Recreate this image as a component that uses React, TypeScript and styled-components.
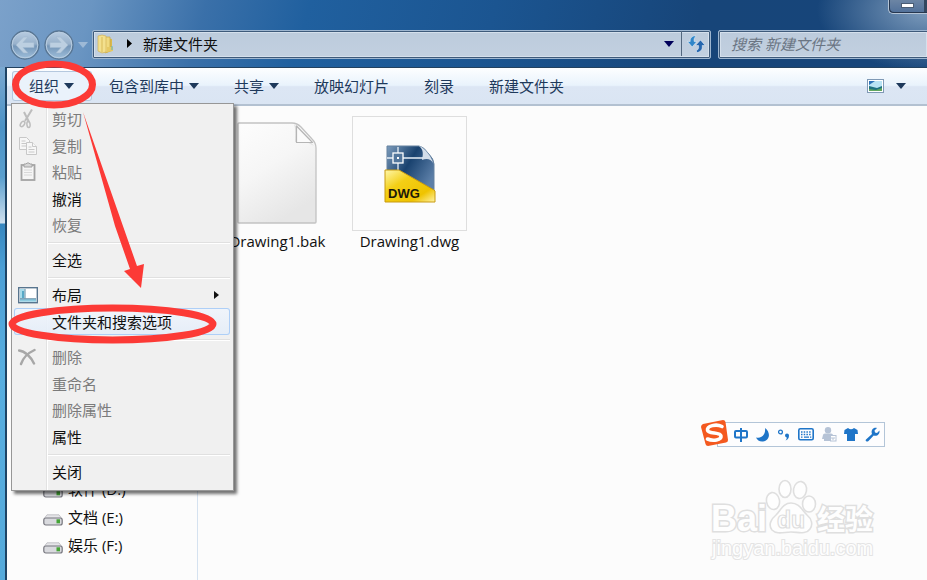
import React from "react";
import styled, { createGlobalStyle, css } from "styled-components";

const GlobalStyle = createGlobalStyle`
  * { box-sizing: border-box; }
  body {
    margin: 0;
    font-family: "Open Sans", "Noto Sans CJK SC", sans-serif;
    font-size: 15px;
    line-height: 20px;
    color: #101010;
  }
  button, input { font: inherit; color: inherit; margin: 0; }
  button { background: none; border: 0; padding: 0; }
  ul { list-style: none; margin: 0; padding: 0; }
`;

const Desktop = styled.div`
  position: relative;
  min-height: 100vh;
  overflow: hidden;
  display: flex;
  flex-direction: column;
  background:
    radial-gradient(ellipse 110px 60px at 100% 10px, #7f9dbd 0%, rgba(110, 145, 185, 0) 100%),
    linear-gradient(105deg, #7ba1ca 0, #6a95c2 90px, #3a70a9 200px, #20609f 300px, #1b5591 480px, #174579 680px, #17457a 860px, #1c4a7e 100%);
  background-size: 100% 110px;
  background-repeat: no-repeat;
`;

const TitleBar = styled.header`
  height: 30px;
  display: flex;
  justify-content: flex-end;
  align-items: flex-start;
`;

const MinimizeButton = styled.button`
  width: 39px;
  height: 14px;
  display: flex;
  padding-left: 12px;
  border: 1px solid #b4c4d6;
  border-width: 0 0 1px 1px;
  border-radius: 0 0 0 5px;
  background: linear-gradient(#6c85a4, #50709a);
  box-shadow: inset 1px -1px 0 #26374f, inset -3px 0 0 #33475f;

  svg { margin-top: 3px; }
`;

const NavRow = styled.nav`
  height: 37px;
  display: flex;
  align-items: flex-start;
  padding-left: 10px;
`;

const NavButtons = styled.div`
  display: flex;
  gap: 4px;
  width: 82px;
  align-items: center;
  height: 30px;

  button { display: flex; }
  svg { display: block; }
`;

const field = css`
  height: 29px;
  display: flex;
  align-items: center;
  background: linear-gradient(#bccbdc, #c2d0e0);
  border: 1px solid #9eb6d0;
  box-shadow: inset 0 0 0 1px #3e5a7a, inset 0 0 0 2px #d5e0ec;
  border-radius: 2px;
`;

const AddressBar = styled.div`
  ${field}
  flex: 1;
  padding: 0 0 2px 4px;
`;

const Crumb = styled.button`
  display: flex;
  align-items: center;
  flex: 1;
  text-align: left;
  gap: 9px;
`;

const AddressDrop = styled.button`
  display: flex;
  width: 26px;
  height: 25px;
  align-items: center;
  justify-content: center;
  border-right: 1px solid #53687f;
`;

const RefreshButton = styled.button`
  width: 28px;
  height: 25px;
  display: flex;
  align-items: center;
  justify-content: center;
`;

const SearchBox = styled.input`
  ${field}
  width: 23%;
  margin-left: 7px;
  margin-right: -2px;
  padding: 0 12px 2px;
  outline: 0;
  font-style: italic;
  &::placeholder { color: #6a7583; opacity: 1; }
`;

const Frame = styled.div`
  flex: 1;
  display: flex;
  padding-left: 5px;
  background: linear-gradient(#7aa8d0 0, #4d93c6 60px, #5a9fce 110px, #cfe0ee 156px, #3787bf 157px, #4c9fd5 200px, #58aee0 300px, #55aadb 100%);
`;

const Window = styled.main`
  flex: 1;
  min-width: 0;
  display: flex;
  flex-direction: column;
  border-left: 2px solid #1e4465;
  border-top: 1px solid #22415f;
  background: #fcfcfc;
`;

const Toolbar = styled.div`
  position: relative;
  height: 38px;
  display: flex;
  align-items: center;
  padding: 0 13px 0 5px;
  background: linear-gradient(#fdfeff 0, #e9f3fc 48%, #dce6f4 52%, #dae5f3 100%);
  border-bottom: 2px solid #b3c1d1;
`;

const ToolButton = styled.button<{ $open?: boolean }>`
  height: 30px;
  display: flex;
  align-items: center;
  gap: 5px;
  padding: 0 18px 0 17px;
  color: #1e395b;
  white-space: nowrap;
  ${(p) =>
    p.$open &&
    css`
      border-radius: 3px;
      background: #eaf2fb;
      box-shadow: inset 0 0 0 1px #b5c8de;
    `}
`;

const ViewTools = styled.div`
  margin-left: auto;
  display: flex;
  align-items: center;
  gap: 12px;
  padding-right: 8px;
  button { display: flex; }
`;

const Menu = styled.div`
  position: absolute;
  z-index: 2;
  top: 35px;
  left: 4px;
  width: 223px;
  padding: 2px 3px 5px 2px;
  background: linear-gradient(90deg, #f1f1f1 34px, #e2e2e2 34px, #e2e2e2 35px, #fff 35px, #fff 36px, #f0f0f0 36px);
  border: 1px solid #979797;
  box-shadow: 3px 3px 3px rgba(0, 0, 0, 0.55);
`;

const MenuGroup = styled.ul`
  & + & {
    padding-top: 9px;
    background: linear-gradient(#e0e0e0 0 1px, #fff 1px 2px, transparent 2px) 34px 4px / 183px 2px no-repeat;
  }
  li { height: 26px; }
  li:nth-child(even) { height: 27px; }
`;

const MenuItem = styled.button<{ $hot?: boolean }>`
  width: 100%;
  height: 100%;
  display: grid;
  grid-template-columns: 38px 1fr 10px;
  align-items: center;
  text-align: left;
  padding-right: 6px;
  border-radius: 3px;
  &:disabled { color: #7b7b7b; }
  span > svg { display: block; margin-left: 4px; }
  ${(p) =>
    p.$hot &&
    css`
      background: linear-gradient(rgba(240, 245, 252, 0.9), rgba(228, 237, 248, 0.9));
      box-shadow: inset 0 0 0 1px #aecff7;
    `}
`;

const Panes = styled.div`
  flex: 1;
  display: flex;
`;

const NavPane = styled.aside`
  width: 191px;
  flex: none;
  display: flex;
  flex-direction: column;
  justify-content: flex-end;
  padding: 0 0 21px 36px;
  border-right: 1px solid #d5e2f0;
`;

const Drive = styled.a`
  height: 28px;
  display: flex;
  align-items: center;
  gap: 5px;
  color: inherit;
  text-decoration: none;
  svg { margin-top: 5px; }
`;

const Files = styled.section`
  flex: 1;
  display: flex;
  align-items: flex-start;
  gap: 17px;
  padding: 10px 0 0 22px;
`;

const FileTile = styled.figure`
  margin: 0;
  width: 115px;
  text-align: center;
`;

const Thumb = styled.div<{ $framed?: boolean }>`
  height: 115px;
  display: flex;
  align-items: center;
  justify-content: center;
  border: 1px solid ${(p) => (p.$framed ? "#dedede" : "transparent")};
`;

const ImeBar = styled.div`
  position: absolute;
  top: 422px;
  right: 42px;
  width: 168px;
  height: 25px;
  display: flex;
  align-items: center;
  justify-content: space-between;
  padding: 0 4px 0 15px;
  background: #fdfdfe;
  border: 1px solid #b3c5d8;
  button { display: flex; color: #1f75c8; }
`;

const SogouLogo = styled.svg`
  position: absolute;
  left: -18px;
  top: -4px;
`;

const Watermark = styled.div`
  position: absolute;
  top: 478px;
  right: 46px;
  width: 172px;
  svg { display: block; overflow: visible; }
`;

const Marks = styled.svg`
  position: absolute;
  z-index: 5;
  top: 0;
  left: 0;
  pointer-events: none;
`;

const Caret = ({ color = "#1e395b" }: { color?: string }) => (
  <svg width="10" height="6" viewBox="0 0 10 6"><path d="M0 0h10L5 6z" fill={color} /></svg>
);

const NavArrow = ({ flip }: { flip?: boolean }) => (
  <svg width="30" height="30" viewBox="0 0 30 30">
    <defs>
      <linearGradient id="orb" x1="0" y1="0" x2="0" y2="1">
        <stop offset="0" stopColor="#b9cde2" />
        <stop offset=".46" stopColor="#98b1cb" />
        <stop offset=".54" stopColor="#7596b8" />
        <stop offset="1" stopColor="#a0c0dc" />
      </linearGradient>
    </defs>
    <circle cx="15" cy="15" r="14" fill="url(#orb)" stroke="#587592" strokeWidth="1.3" />
    <circle cx="15" cy="15" r="12.8" fill="none" stroke="#b9cde0" strokeWidth="1" />
    <path
      d="M6 15l7.500-8h4.500l-5 5.500h11v5H13l5 5.500h-4.500z"
      fill="#bccfe1"
      stroke="#a3bad0"
      strokeWidth=".6"
      transform={flip ? "translate(30 0) scale(-1 1)" : undefined}
    />
  </svg>
);

const FolderIcon = () => (
  <svg width="18" height="20" viewBox="0 0 18 20">
    <path d="M9 4l6 1v12l-6 2z" fill="#d9b94c" />
    <path d="M8 3h5v14l-5 2z" fill="#f0da80" stroke="#c9a844" strokeWidth=".7" />
    <path d="M1 2l4-1 4 1v16l-4 1-4-2z" fill="#f3e08e" stroke="#d2b357" strokeWidth=".7" />
    <path d="M5 3v15" stroke="#d9bb58" />
    <path d="M10 13h6v4l-6 1z" fill="#e6c964" />
    <path d="M15 12v4" stroke="#5fb3c4" />
  </svg>
);

const RefreshIcon = () => (
  <svg width="19" height="18" viewBox="0 0 19 18" stroke="#f2f7fc" strokeWidth=".5">
    <path d="M7 .8C4 2 2.800 4 3.200 6.500H.5L5.200 12l4.600-5.500H7.200C6.800 4.500 7 3 9 1.200z" fill="#2f86c9" />
    <path d="M10.500 17.500c4-1 5.200-3.500 4.700-7h3L13.500 5 8.500 10.500h3c.5 2.500 0 4-2.500 5.500z" fill="#2566ae" />
  </svg>
);

const PictureIcon = () => (
  <svg width="17" height="14" viewBox="0 0 17 14">
    <rect x=".5" y=".5" width="16" height="13" fill="#fff" stroke="#7f99b5" />
    <path d="M2 2h13v10H2z" fill="#b9e3f4" />
    <path d="M2 2h6L2 6z" fill="#2e73b9" />
    <path d="M2 7l4 1 4 1 5-2v5H2z" fill="#1f7280" />
    <path d="M2 10l7 1 6-2v3H2z" fill="#62a760" />
  </svg>
);

const CutIcon = () => (
  <svg width="20" height="20" viewBox="0 0 20 20" fill="none" stroke="#bdbdbd">
    <path d="M6 3l5 10M14 0.500L7 12" strokeWidth="2" />
    <ellipse cx="4.500" cy="15" rx="1.800" ry="3" transform="rotate(35 4.500 15)" strokeWidth="1.500" />
    <ellipse cx="10.500" cy="15.500" rx="1.600" ry="3" transform="rotate(-6 10.500 15.500)" strokeWidth="1.500" />
  </svg>
);

const CopyIcon = () => (
  <svg width="20" height="20" viewBox="0 0 20 20" fill="#f7f7f7" stroke="#c8c8c8">
    <path d="M1.500 1.500h7l3 3v9h-10z" />
    <path d="M3.500 5h4M3.500 7.500h5M3.500 10h5" />
    <path d="M8.500 6.500h6l4 4v8h-10z" />
    <path d="M14.500 6.500v4h4M10.500 11h3M10.500 13.500h6M10.500 16h6" />
  </svg>
);

const PasteIcon = () => (
  <svg width="20" height="20" viewBox="0 0 20 20">
    <rect x="3.500" y="3" width="13" height="15" fill="#f5f5f5" stroke="#a4a4a4" strokeWidth="1.800" />
    <path d="M6 2h2l1-1h2l1 1h2v3H6z" fill="#d6d6d6" stroke="#a2a2a2" />
    <path d="M6 8h8M6 10.500h8M6 13h8" stroke="#d8d8d8" />
  </svg>
);

const LayoutIcon = () => (
  <svg width="20" height="18" viewBox="0 0 20 18">
    <rect x=".7" y="1.700" width="18.600" height="15" fill="#fff" stroke="#58758f" strokeWidth="1.400" />
    <path d="M2 3h4.500v9.500H2z" fill="#a5dbea" />
    <path d="M4 5h2v7H4z" fill="#56a8c6" />
    <path d="M2 13h16v2.700H2z" fill="#8dcbe0" />
    <path d="M7 3v9.500M2 12.800h16" stroke="#5b87a0" />
  </svg>
);

const DeleteIcon = () => (
  <svg width="20" height="18" viewBox="0 0 20 18">
    <path d="M1 2.500C7 3 13 9 16 15.500M16.500 2C10 5 5 10 3 16" fill="none" stroke="#a7a7a7" strokeWidth="2.400" strokeLinecap="round" />
  </svg>
);

const DriveIcon = () => (
  <svg width="20" height="12" viewBox="0 0 20 12">
    <path d="M4 .8h12l3 4H1z" fill="#e5e5e8" stroke="#b8b8bd" strokeWidth=".8" />
    <rect x=".8" y="4" width="18.400" height="7" rx="2" fill="#d9dade" stroke="#77777f" strokeWidth="1.200" />
    <rect x="13.500" y="5.300" width="3.500" height="4" fill="#45a436" />
  </svg>
);

const PageIcon = () => (
  <svg width="82" height="105" viewBox="0 0 82 105">
    <defs>
      <linearGradient id="sheet" x1="0" y1="0" x2=".5" y2="1">
        <stop offset="0" stopColor="#fdfdfd" />
        <stop offset=".5" stopColor="#f6f6f6" />
        <stop offset="1" stopColor="#e6e6e6" />
      </linearGradient>
    </defs>
    <path d="M1 3q0-1 1-1h53q5 0 9 4l11 12q4 4 4 9v74q0 1-1 1H2q-1 0-1-1z" fill="url(#sheet)" stroke="#c2c2c2" strokeWidth="1.300" />
    <path d="M57 3c2 6 1 14 1 18 8-1 14 0 19 4z" fill="#dfdfdf" />
    <path d="M59.500 5v16.500h16z" fill="#fbfbfb" stroke="#b5b5b5" strokeWidth="1.200" strokeLinejoin="round" />
  </svg>
);

const DwgIcon = () => (
  <svg width="52" height="58" viewBox="0 0 52 58">
    <defs>
      <linearGradient id="navy" x1="0" y1="0" x2="1" y2="0.6">
        <stop offset="0" stopColor="#7d9cbc" />
        <stop offset=".5" stopColor="#19426f" />
        <stop offset="1" stopColor="#5c7fa8" />
      </linearGradient>
      <linearGradient id="gold" x1="0" y1="0" x2="1" y2="1">
        <stop offset="0" stopColor="#fff7ac" />
        <stop offset=".35" stopColor="#f3cf16" />
        <stop offset=".75" stopColor="#efc300" />
        <stop offset="1" stopColor="#fff3a8" />
      </linearGradient>
    </defs>
    <path d="M3 1h32q5 1 9 7 6 6 6 11v30H3z" fill="url(#navy)" stroke="#64819f" />
    <path d="M35 1c5 4 4 9 3 14 5-2 9-1 11 3-1-6-9-16-14-17z" fill="#d3deea" />
    <path d="M14 2v24M3 13h36" stroke="#e8f0f8" strokeWidth="1.300" />
    <rect x="9" y="8" width="10" height="10" fill="#52769c" stroke="#fff" strokeWidth="1.300" />
    <rect x="13" y="12" width="2" height="2" fill="#fff" />
    <path d="M1 25h14l35 20 1 1v11H1z" fill="url(#gold)" stroke="#c89a10" />
    <text x="4" y="53" fontFamily="Liberation Sans, sans-serif" fontWeight="700" fontSize="13" fill="#1c1a08">DWG</text>
  </svg>
);

type Entry = { label: string; icon?: React.ReactNode; off?: boolean; hot?: boolean; sub?: boolean };

const groups: Entry[][] = [
  [
    { label: "剪切", icon: <CutIcon />, off: true },
    { label: "复制", icon: <CopyIcon />, off: true },
    { label: "粘贴", icon: <PasteIcon />, off: true },
    { label: "撤消" },
    { label: "恢复", off: true },
  ],
  [{ label: "全选" }],
  [{ label: "布局", icon: <LayoutIcon />, sub: true }, { label: "文件夹和搜索选项", hot: true }],
  [
    { label: "删除", icon: <DeleteIcon />, off: true },
    { label: "重命名", off: true },
    { label: "删除属性", off: true },
    { label: "属性" },
  ],
  [{ label: "关闭" }],
];

const tools = [
  { label: "组织", menu: true, open: true },
  { label: "包含到库中", menu: true },
  { label: "共享", menu: true },
  { label: "放映幻灯片" },
  { label: "刻录" },
  { label: "新建文件夹" },
];

const drives = ["软件 (D:)", "文档 (E:)", "娱乐 (F:)"];

const imeIcons: [string, React.ReactNode][] = [
  ["中文", <svg width="16" height="16" viewBox="0 0 16 16" fill="none" stroke="currentColor" strokeWidth="2"><rect x="2" y="4" width="12" height="6.500" rx="1" /><path d="M8 1v14" /></svg>],
  ["半角", <svg width="14" height="14" viewBox="0 0 14 14"><path d="M9 0c6 4 5 13-2 13.500C4 14 1 12 0 9.500 5 11 10 7 9 0z" fill="currentColor" /></svg>],
  ["标点", <svg width="14" height="14" viewBox="0 0 14 14"><circle cx="3.500" cy="4" r="1.900" fill="none" stroke="currentColor" strokeWidth="1.300" /><path d="M8 7.500a2 2 0 1 1 4 0c0 2.500-1 4-3.500 5 1-1.200 1.300-2 1.200-3A2 2 0 0 1 8 7.500z" fill="currentColor" /></svg>],
  ["软键盘", <svg width="16" height="13" viewBox="0 0 16 13"><rect x=".8" y=".8" width="14.400" height="11" rx="1.500" fill="none" stroke="currentColor" strokeWidth="1.600" /><path d="M3 4h10M3 6.500h10" stroke="currentColor" strokeWidth="1.500" strokeDasharray="1.500 1.200" /><path d="M3 9.200h1.500M6 9.200h5M12 9.200h1.300" stroke="currentColor" strokeWidth="1.300" /></svg>],
  ["账户", <svg width="15" height="15" viewBox="0 0 15 15"><circle cx="6" cy="3.300" r="3.200" fill="#b6c3d6" /><path d="M1 8q0-1.500 2-1.500h6q2 0 2 2V14H2v-2H0z" fill="#b6c3d6" /><rect x="8.500" y="8.500" width="5.500" height="5.500" fill="#fff" stroke="#b6c3d6" /><path d="M10 10v2h2v-2" fill="none" stroke="#b6c3d6" /></svg>],
  ["皮肤", <svg width="14" height="13" viewBox="0 0 14 13"><path d="M4 0q3 2.500 6 0l3.500 2L14 6h-3v7H3V6H0l.5-4z" fill="currentColor" /></svg>],
  ["工具", <svg width="15" height="15" viewBox="0 0 15 15"><path d="M1 12.500l6-5.500C5.500 3 8.500 0 12 1L9.500 3.500l.5 2 2 .5L14.500 3.500C15 7.500 12 9.500 8.700 8.500L3.500 14q-1.500 1-2.500 0-1-.7 0-1.500z" fill="currentColor" /></svg>],
];

export default function App() {
  return (
    <Desktop>
      <GlobalStyle />
      <TitleBar>
        <MinimizeButton aria-label="最小化">
          <svg width="13" height="5"><rect x=".5" y=".5" width="12" height="4" fill="#fff" stroke="#4b5d74" /></svg>
        </MinimizeButton>
      </TitleBar>
      <NavRow>
        <NavButtons>
          <button aria-label="后退"><NavArrow /></button>
          <button aria-label="前进"><NavArrow flip /></button>
          <button aria-label="最近浏览"><Caret color="#9db9d6" /></button>
        </NavButtons>
        <AddressBar>
          <Crumb>
            <FolderIcon />
            <svg width="10" height="9"><path d="M3 0v9l5-4.500z" fill="#000" /></svg>
            新建文件夹
          </Crumb>
          <AddressDrop aria-label="以前的位置"><Caret color="#00005a" /></AddressDrop>
          <RefreshButton aria-label="刷新"><RefreshIcon /></RefreshButton>
        </AddressBar>
        <SearchBox aria-label="搜索" placeholder="搜索 新建文件夹" />
      </NavRow>
      <Frame>
        <Window>
          <Toolbar>
            {tools.map((t) => (
              <ToolButton key={t.label} $open={t.open}>
                {t.label}
                {t.menu && <Caret />}
              </ToolButton>
            ))}
            <ViewTools>
              <button aria-label="更改视图"><PictureIcon /></button>
              <button aria-label="更多选项"><Caret /></button>
            </ViewTools>
            <Menu>
              {groups.map((g) => (
                <MenuGroup key={g[0].label}>
                  {g.map((m) => (
                    <li key={m.label}>
                      <MenuItem disabled={m.off} $hot={m.hot}>
                        <span>{m.icon}</span>
                        <span>{m.label}</span>
                        {m.sub && <svg width="6" height="8"><path d="M0 0v8l5-4z" fill="#111" /></svg>}
                      </MenuItem>
                    </li>
                  ))}
                </MenuGroup>
              ))}
            </Menu>
          </Toolbar>
          <Panes>
            <NavPane>
              {drives.map((d) => (
                <Drive key={d} href="#"><DriveIcon />{d}</Drive>
              ))}
            </NavPane>
            <Files>
              <FileTile>
                <Thumb><PageIcon /></Thumb>
                <figcaption>Drawing1.bak</figcaption>
              </FileTile>
              <FileTile>
                <Thumb $framed><DwgIcon /></Thumb>
                <figcaption>Drawing1.dwg</figcaption>
              </FileTile>
            </Files>
          </Panes>
        </Window>
      </Frame>
      <ImeBar>
        <SogouLogo width="30" height="29" viewBox="0 0 30 29">
          <path d="M3 5L23 1q2 0 2.500 2L28 21q0 2-2 2.500L8 27q-2 0-2.500-2L1 8q0-2 2-3z" fill="#f4591f" />
          <path d="M22 7.500C16 4.500 7 7 7.500 11c.5 4.500 13 1.500 13.500 6 .5 4-8 5.500-13.500 3" fill="none" stroke="#fff" strokeWidth="3.600" strokeLinecap="round" />
        </SogouLogo>
        {imeIcons.map(([name, icon]) => (
          <button key={name} aria-label={name}>{icon}</button>
        ))}
      </ImeBar>
      <Watermark>
        <svg width="172" height="84" viewBox="0 0 172 84" fill="#fefefe" stroke="#dfdfdf" strokeWidth="1.600">
          <g fontFamily="Liberation Sans, sans-serif" fontWeight="700" paintOrder="stroke">
            <text x="2" y="53" fontSize="36" strokeWidth="3">Bai</text>
            <text x="108" y="52" fontSize="28" fontFamily="Noto Sans CJK SC, sans-serif" strokeWidth="3">经验</text>
            <text x="3" y="77" fontSize="20" fontWeight="400" strokeWidth="2" stroke="#e4e4e4">jingyan.baidu.com</text>
          </g>
          <ellipse cx="64" cy="23" rx="6.500" ry="8.500" transform="rotate(-10 64 23)" />
          <ellipse cx="76" cy="11" rx="6" ry="8.500" />
          <ellipse cx="91" cy="12" rx="6.500" ry="8.500" transform="rotate(10 91 12)" />
          <ellipse cx="100" cy="26" rx="6.500" ry="8" />
          <path d="M82 25c8 0 11 7 16 12 5 4 6 10 3 14-4 6-12 3-19 3s-14 3-19-2c-4-5-1-11 4-15 5-5 7-12 15-12z" />
          <text x="68" y="50" fontFamily="Liberation Sans, sans-serif" fontWeight="700" fontSize="23" fill="#fefefe" strokeWidth="1.200">du</text>
        </svg>
      </Watermark>
      <Marks width="240" height="350" viewBox="0 0 240 350" aria-hidden="true">
        <g fill="none" stroke="#fc3a36" strokeWidth="7">
          <ellipse cx="54" cy="84.500" rx="38.500" ry="20.500" />
          <ellipse cx="112.500" cy="324" rx="100.500" ry="16" />
        </g>
        <path d="M83 112L137 266l7-2-3 24-17-17 6-2L115 226z" fill="#fc3a36" />
      </Marks>
    </Desktop>
  );
}
